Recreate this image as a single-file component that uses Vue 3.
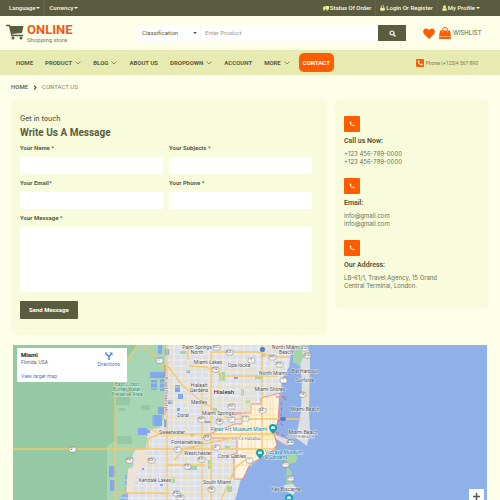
<script setup>
import { ref } from 'vue'

const nav = [
  { text: 'HOME' },
  { text: 'PRODUCT', menu: true },
  { text: 'BLOG', menu: true },
  { text: 'ABOUT US' },
  { text: 'DROPDOWN', menu: true },
  { text: 'ACCOUNT' },
  { text: 'MORE', menu: true },
]

const fields = [
  { id: 'name', label: 'Your Name *', type: 'text' },
  { id: 'subjects', label: 'Your Subjects *', type: 'text' },
  { id: 'email', label: 'Your Email*', type: 'email' },
  { id: 'phone', label: 'Your Phone *', type: 'tel' },
]
const form = ref({ name: '', subjects: '', email: '', phone: '', message: '' })

const contacts = [
  { title: 'Call us Now:', lines: ['+123 456-789-0000', '+123 456-789-0000'] },
  { title: 'Email:', lines: ['info@gmail.com', 'info@gmail.com'] },
  { title: 'Our Address:', lines: ['LB-61/1, Travel Agency, 15 Grand', 'Central Terminal, London.'] },
]

const handset = 'M3 4a2 2 0 0 1 2-2h3l2 6-3 2q2 5 7 7l2-3 6 2v3a2 2 0 0 1-2 2A17 17 0 0 1 3 4z'

// Street grid of the urban area
const minorX = Array.from({ length: 26 }, (_, i) => 132 + i * 7)
const minorY = Array.from({ length: 26 }, (_, i) => 348 + i * 6)

const ponds = [
  [150, 372, 15, 6], [151, 380, 6, 10], [160, 379, 5, 12], [158, 345, 4, 9], [165, 349, 4, 6],
  [152, 415, 10, 11], [158, 407, 6, 7], [164, 419, 3, 8], [138, 428, 9, 7], [109, 466, 7, 11],
  [110, 480, 5, 11], [147, 430, 3, 3], [175, 385, 5, 7], [178, 394, 5, 5], [186, 370, 4, 3],
  [168, 400, 5, 4], [177, 408, 3, 3], [215, 368, 4, 3], [234, 377, 4, 2], [142, 468, 2, 2],
  [160, 484, 3, 2], [205, 421, 5, 2], [190, 434, 4, 2], [175, 448, 3, 2], [248, 359, 4, 2],
]
const parks = [
  [219, 372, 6, 9], [255, 375, 8, 4], [180, 351, 6, 3], [187, 466, 10, 4], [171, 477, 4, 6],
  [208, 460, 4, 9], [246, 400, 4, 3], [241, 389, 3, 7], [227, 486, 5, 6], [261, 353, 4, 4],
  [191, 446, 4, 3], [213, 408, 4, 4], [151, 395, 4, 4], [225, 446, 5, 3], [270, 356, 5, 3],
]

const labels = [
  ['Palm Springs', 197, 349], ['North', 197, 354], ['Miami Lakes', 208, 364], ['Opa-locka', 239, 367],
  ['North Miami', 286, 349], ['Beach', 286, 354], ['North Miami', 273, 375], ['Bal Harbour', 305, 373],
  ['Surfside', 305, 382], ['Hialeah', 199, 387], ['Gardens', 199, 392], ['Miami Shores', 270, 391],
  ['Medley', 199, 404], ['Doral', 183, 417], ['Miami Springs', 218, 415], ['Miami Beach', 305, 411],
  ['Miami Beach', 303, 434], ['Sweetwater', 172, 434], ['Fontainebleau', 187, 444], ['Westchester', 198, 455],
  ['Coral Gables', 232, 458], ['South Miami', 217, 484], ['Key Biscayne', 286, 491], ['Kendale Lakes', 155, 482],
]
const shields = [
  ['27', 159, 360], ['41', 72, 449], ['997', 129, 460], ['826', 151, 460], ['823', 216, 347],
  ['826', 229, 352], ['9', 251, 360], ['909', 272, 357], ['915', 279, 364], ['934', 215, 369],
  ['1', 283, 380], ['953', 231, 406], ['441', 262, 410], ['27', 231, 419], ['948', 219, 421],
  ['969', 201, 419], ['112', 245, 418], ['A1A', 307, 355], ['A1A', 304, 348], ['934', 302, 394],
  ['41', 177, 449], ['41', 216, 447], ['826', 201, 459], ['976', 187, 466], ['1', 249, 460],
  ['874', 176, 493], ['986', 211, 489], ['985', 180, 497], ['836', 207, 437], ['A1A', 290, 442], ['913', 285, 464], ['913', 290, 478],
]
const pins = [[273, 428], [260, 453], [289, 498]]
</script>

<template>
  <div class="page">
    <div class="topbar">
      <div class="group">
        <button type="button">Language<i class="caret"></i></button>
        <button type="button">Currency<i class="caret"></i></button>
      </div>
      <div class="group links">
        <a href="#order">
          <svg width="6" height="5" viewBox="0 0 24 20"><path fill="#f4ef8c" d="M9 0h15v14H9zM0 6l3-4h5v12H0z" /><circle cx="5" cy="16" r="3" fill="#f4ef8c" /><circle cx="18" cy="16" r="3" fill="#f4ef8c" /></svg>
          Status Of Order
        </a>
        <a href="#login">
          <svg width="5" height="6" viewBox="0 0 20 24"><path d="M5 12V7a5 5 0 0 1 10 0v5" fill="none" stroke="#f4ef8c" stroke-width="3" /><rect x="1" y="11" width="18" height="12" rx="2" fill="#f4ef8c" /></svg>
          Login Or Register
        </a>
        <button type="button">
          <svg width="5" height="6" viewBox="0 0 20 24"><circle cx="10" cy="7" r="6" fill="#f4ef8c" /><path d="M1 23v-5q0-5 5-5h8q5 0 5 5v5z" fill="#f4ef8c" /></svg>
          My Profile<i class="caret"></i>
        </button>
      </div>
    </div>

    <header class="header">
      <a class="logo" href="#home">
        <svg width="18" height="16" viewBox="0 0 36 32"><path d="M1 3h6l5 20h21" fill="none" stroke="#5a5c40" stroke-width="3" stroke-linecap="round" /><path d="M8 4h27l-3 14-21 2z" fill="#5a5c40" /><circle cx="14" cy="28" r="3" fill="#5a5c40" /><circle cx="30" cy="28" r="3" fill="#5a5c40" /></svg>
        <span class="brand"><strong>ONLINE</strong><small>Shopping store</small></span>
      </a>
      <form class="search" @submit.prevent>
        <div class="pick">
          <select aria-label="Classification"><option>Classification</option></select>
          <i class="caret"></i>
        </div>
        <input type="search" placeholder="Enter Product" aria-label="Enter Product" />
        <button type="submit" aria-label="Search">
          <svg width="7" height="7" viewBox="0 0 14 14" fill="none" stroke="#fff" stroke-width="2.400"><circle cx="6" cy="6" r="4" /><path d="M9 9l4 4" /></svg>
        </button>
      </form>
      <a class="wishlist" href="#wishlist">
        <svg width="12" height="11" viewBox="0 0 24 22"><path fill="#ff5c00" d="M12 22L2 12C-1 8 0 2 5 1q4-1 7 3 3-4 7-3c5 1 6 7 3 11z" /></svg>
        <svg class="bag" width="12" height="12" viewBox="0 0 24 24"><path fill="#ff5c00" d="M2 7h20l2 12H0zM0 20h24v2q0 2-2 2H2q-2 0-2-2z" /><path d="M7 10V5a5 4 0 0 1 10 0v5" fill="none" stroke="#ff5c00" stroke-width="2" /><path d="M7 8v3M17 8v3" stroke="#fdffe8" stroke-width="1" /></svg>
        <span>WISHLIST</span>
      </a>
    </header>

    <nav class="nav">
      <a v-for="item in nav" :key="item.text" href="#menu">
        {{ item.text }}
        <svg v-if="item.menu" width="6" height="4" viewBox="0 0 12 8"><path d="M1 1l5 5 5-5" fill="none" stroke="#8a8d5c" stroke-width="2" /></svg>
      </a>
      <a class="active" href="#contact">CONTACT</a>
      <a class="phone" href="tel:+1234567890">
        <span class="badge"><svg width="6" height="6" viewBox="0 0 24 24"><path :d="handset" fill="#fff" /></svg></span>
        Phone (+123)4 567 890
      </a>
    </nav>

    <div class="crumbs">
      <a href="#home">HOME</a>
      <svg width="4" height="5" viewBox="0 0 8 10"><path d="M2 1l4 4-4 4" fill="none" stroke="#5a5c40" stroke-width="2.400" /></svg>
      <span>CONTACT US</span>
    </div>

    <main class="columns">
      <form class="card message" @submit.prevent>
        <p class="intro">Get in touch</p>
        <h2>Write Us A Message</h2>
        <div class="fields">
          <div v-for="f in fields" :key="f.id" class="field">
            <label :for="f.id">{{ f.label }}</label>
            <input :id="f.id" v-model="form[f.id]" :type="f.type" />
          </div>
          <div class="field wide">
            <label for="message">Your Message *</label>
            <textarea id="message" v-model="form.message"></textarea>
          </div>
        </div>
        <button class="send" type="submit">Send Message</button>
      </form>

      <aside class="card info">
        <section v-for="c in contacts" :key="c.title">
          <span class="tile"><svg width="6" height="6" viewBox="0 0 24 24"><path :d="handset" fill="#fff" /></svg></span>
          <h3>{{ c.title }}</h3>
          <p v-for="(line, i) in c.lines" :key="i">{{ line }}</p>
        </section>
      </aside>
    </main>

    <div class="map">
      <svg class="canvas" viewBox="13 345 474 155" preserveAspectRatio="xMinYMin slice" role="img" aria-label="Map of Miami">
        <rect x="13" y="345" width="474" height="155" fill="#90b1e8" />
        <path fill="#dce0e6" d="M128 345H292L289 367 282 379 280 398 277 421 273 434 276 445 270 453 260 459 249 466 241 479 235 500H128z" />
        <clipPath id="land"><path d="M133 430L163 420 167 345H290L289 367 282 379 280 398 277 421 273 434 276 445 260 459 249 466 241 479 235 500H118L125 470 133 450z" /></clipPath>
        <g clip-path="url(#land)">
          <path v-for="x in minorX" :key="'x' + x" :d="`M${x} 345V500`" stroke="#f3f4f6" stroke-width="0.700" />
          <path v-for="y in minorY" :key="'y' + y" :d="`M120 ${y}H292`" stroke="#f3f4f6" stroke-width="0.700" />
        </g>

        <path fill="#94c9a3" d="M13 345H138L118 373 116 442 108 448 109 500H13z" />
        <path fill="#a8d6b5" d="M137 345H166L164 418 160 428 148 430 146 450 133 452 133 468 125 474 125 491 119 500H107V446L116 441V372z" />
        <path fill="#94c9a3" d="M116 397h14v8h-14zM117 436h14l2 8h-16zM123 388h9v5h-9zM119 408h6v3h-6zM141 405h9v5h-9z" />
        <path fill="#efe1d3" d="M135 450l12-1v17l-12 8-2 17-7 1 2-23 7-3zM149 430l14-2v8h-13z" />
        <rect v-for="(p, i) in ponds" :key="'w' + i" :x="p[0]" :y="p[1]" :width="p[2]" :height="p[3]" fill="#82a9ec" />
        <rect v-for="(p, i) in parks" :key="'p' + i" :x="p[0]" :y="p[1]" :width="p[2]" :height="p[3]" fill="#a5d5a8" />
        <path stroke="#a8d6b5" stroke-width="1" d="M150 383h15M150 388h15M153 410v17" />

        <path fill="#dce0e6" d="M294 345h14l2 12-1 54 1 20-3 15-11-8 5-27 1-30-2-18-7-7z" />
        <path fill="#a5d5a8" d="M293 349l7-1 4 8-5 10-6-4zM285 457l9-4 4 5-3 5-9 1zM287 466l5 7-1 8 5 7-7 1-3-8z" />
        <path fill="#dce0e6" d="M284 485l9-1 4 5-4 6-9-5z" />
        <path fill="#dce0e6" stroke="#ea8d8d" stroke-width="0.700" d="M274 434l14 5 6 6-7 1-13-8z" />

        <path fill="#fdf5e2" stroke="#ea8585" stroke-width="1" d="M251 404h10v-6l19-5-2 28-4 13 3 11-6 7-10 6-11 6-7 15h-9v-25h3v-16h-34l6-4 16-6 10-4h7v-10h-9v-1h18z" />

        <g fill="none" stroke="#f5dfa0" stroke-width="0.900">
          <path d="M151 460V500M172 345v140M187 352V500M211 352V500M221 345V490M231 400V485M242 345V466M251 362V466M270 345V442M281 350V375" />
          <path d="M168 371h112M170 387h113M167 401h84M165 419h108M165 436h108M150 449h125M148 465h103M130 493h106M235 409h42M238 415h38M238 427h37M243 432h31M243 439h31M243 453h22M168 478h72" />
          <path d="M248 400V464M255 399V458M262 398V455M267 397V452M273 396V445M308 356L305 435" />
        </g>
        <g fill="none" stroke="#f7c767" stroke-width="1.300">
          <path d="M115 381V500M13 449H275M138 345L115 381M142 345Q155 355 167 372M167 345V500M148 449V439L160 434H275M149 429l15 6" />
          <path d="M166 364l17 22 18 15 30 19M188 360V345M211 352h46l18 5h15M211 352V500M202 385V500M262 345V454M118 493h51M167 465h38M231 419h70M241 436l-55 12-12 12M221 500l15-33 12-9M189 366l17 1 17 9h54" />
        </g>
        <path fill="none" stroke="#d95f69" stroke-width="1" stroke-dasharray="3 3" d="M276 397h11l-6 7 1 9-4 9 6 4M276 432l10 5 7 7" />
        <path fill="none" stroke="#b47c76" stroke-width="0.700" d="M165 365v50" />

        <g class="shield">
          <template v-for="(s, i) in shields" :key="'s' + i">
            <rect :x="s[1] - 3" :y="s[2] - 2" width="7" height="5" rx="2" />
            <text :x="s[1]" :y="s[2] + 1">{{ s[0] }}</text>
          </template>
        </g>
        <rect x="260" y="347" width="5" height="5" rx="2" fill="#547dca" />
        <rect x="280" y="417" width="6" height="4" rx="2" fill="#547dca" />

        <g class="place">
          <text v-for="(l, i) in labels" :key="'l' + i" :x="l[1]" :y="l[2]">{{ l[0] }}</text>
          <text class="city" x="224" y="394">Hialeah</text>
          <text class="area" x="246" y="440">LITTLE HAVANA</text>
          <text class="area" x="301" y="438">SOUTH BEACH</text>
          <text class="park" x="127" y="386">East Coast</text>
          <text class="park" x="127" y="391">Buffer Water</text>
          <text class="park" x="127" y="396">Preserve Area</text>
          <text class="sight" x="239" y="431">Pérez Art Museum Miami</text>
          <text class="sight" x="284" y="454">Vizcaya Museum</text>
          <text class="sight" x="276" y="459">&amp; Gardens</text>
          <text class="route" transform="translate(165 395) rotate(90)">Ronald Reagan Tpke</text>
        </g>
        <g v-for="(p, i) in pins" :key="'n' + i">
          <path :d="`M${p[0]} ${p[1] + 6}q-4-4-4-6a4 4 0 0 1 8 0q0 2-4 6z`" fill="#16a5b5" />
          <path :d="`M${p[0] - 2} ${p[1] + 1}v-2l2-1 2 1v2z`" fill="#d9f6f7" />
        </g>
      </svg>

      <div class="place-card">
        <div class="where">
          <strong>Miami</strong>
          <span>Florida, USA</span>
          <a href="#map">View larger map</a>
        </div>
        <a class="directions" href="#directions">
          <svg width="8" height="8" viewBox="0 0 16 16"><path d="M8 16V9L3 4M8 9l5-5" fill="none" stroke="#4a87e8" stroke-width="3" /><path d="M9 1h6v6zM0 1h5L1 6z" fill="#4a87e8" /></svg>
          Directions
        </a>
      </div>
      <button class="zoom" type="button" aria-label="Zoom in">
        <svg width="7" height="7" viewBox="0 0 7 7"><path d="M3 0h1v3h3v1H4v3H3V4H0V3h3z" fill="#555" stroke="#555" stroke-width="0.500" /></svg>
      </button>
    </div>
  </div>
</template>

<style>
body {
  margin: 0;
  background: #fdffe8;
}
</style>

<style scoped>
* {
  box-sizing: border-box;
}
.page {
  font-family: Roboto, "Liberation Sans", sans-serif;
  font-size: 6px;
  line-height: 8px;
  color: #5a5c40;
  background: #fdffe8;
}
a {
  color: inherit;
  text-decoration: none;
}
button,
input,
select,
textarea {
  font: inherit;
  color: inherit;
  border: 0;
  padding: 0;
  margin: 0;
  background: none;
  border-radius: 0;
}
h2,
h3,
p {
  margin: 0;
}
svg {
  flex: none;
}
.caret {
  display: inline-block;
  border: 2px solid transparent;
  border-top-color: currentColor;
  border-bottom: 0;
  vertical-align: middle;
}
.topbar {
  display: flex;
  justify-content: space-between;
  height: 16px;
  padding: 0 20px 0 9px;
  background: #5a5c40;
  color: #fbfbe6;
  font-weight: 500;
}
.group {
  display: flex;
}
.group > * {
  display: flex;
  align-items: center;
  gap: 1px;
}
.group > * + * {
  margin-left: 4px;
  padding-left: 4px;
  border-left: 1px solid #64664b;
}
.group button {
  font-weight: 500;
}
.header {
  display: grid;
  grid-template-columns: 131fr 269fr 94fr;
  align-items: center;
  height: 34px;
  padding-left: 6px;
}
.logo {
  display: flex;
  align-items: flex-start;
  gap: 3px;
}
.brand {
  display: flex;
  flex-direction: column;
}
.brand strong {
  font-size: 13px;
  line-height: 12px;
  color: #f05a1c;
}
.brand small {
  font-size: 6px;
  line-height: 7px;
  color: #777957;
}
.search {
  display: flex;
  height: 16px;
  background: #fff;
}
.pick {
  display: flex;
  align-items: center;
  width: 64px;
  padding: 0 3px 0 5px;
  border-right: 1px solid #f5f5ee;
}
.pick select {
  flex: 1;
  min-width: 0;
  appearance: none;
  outline: 0;
}
.search input {
  flex: 1;
  min-width: 0;
  padding-left: 4px;
}
.search input::placeholder {
  color: #999;
  opacity: 1;
}
.search button {
  display: grid;
  place-items: center;
  width: 28px;
  background: #5a5c40;
}
.wishlist {
  display: flex;
  align-items: center;
  gap: 2px;
  padding-left: 17px;
  font-family: Inter, sans-serif;
}
.bag {
  margin-left: 2px;
}
.nav {
  display: flex;
  align-items: center;
  gap: 12px;
  height: 25px;
  padding: 0 22px 0 16px;
  background: #e7ebb1;
  font-weight: 700;
  white-space: nowrap;
}
.nav a {
  display: flex;
  align-items: center;
  gap: 3px;
}
.nav .active {
  height: 19px;
  margin-left: -3px;
  padding: 0 4px;
  border-radius: 5px;
  background: #ff5c00;
  color: #fff;
}
.nav .phone {
  gap: 2px;
  margin-left: auto;
  font-weight: 400;
  font-size: 5px;
  color: #777957;
}
.badge {
  display: grid;
  place-items: center;
  width: 8px;
  height: 8px;
  border-radius: 1px;
  background: #ff5c00;
}
.crumbs {
  display: flex;
  align-items: center;
  gap: 5px;
  height: 24px;
  padding: 0 11px;
}
.crumbs a {
  font-weight: 500;
}
.crumbs span {
  color: #818368;
}
.columns {
  display: grid;
  grid-template-columns: 316fr 154fr;
  align-items: start;
  gap: 8px;
  padding: 0 11px;
}
.card {
  border-radius: 5px;
  background: #f9fbdd;
}
.message {
  padding: 15px 15px 16px 9px;
}
.intro {
  font-family: Inter, sans-serif;
  font-size: 7px;
  line-height: 10px;
  font-weight: 500;
}
h2 {
  margin: 2px 0 4px;
  font-size: 10px;
  line-height: 14px;
  font-weight: 700;
}
.fields {
  display: grid;
  grid-template-columns: 1fr 1fr;
  gap: 5px 6px;
}
.field {
  display: flex;
  flex-direction: column;
  gap: 5px;
  min-width: 0;
}
.wide {
  grid-column: 1 / -1;
}
.field label {
  font-weight: 700;
}
.field input {
  width: 100%;
  height: 17px;
  padding: 0 4px;
  background: #fff;
}
.field textarea {
  width: 100%;
  height: 65px;
  padding: 4px;
  resize: none;
  background: #fff;
}
.send {
  display: block;
  height: 18px;
  margin-top: 9px;
  padding: 0 9px;
  border-radius: 1px;
  background: #5a5c40;
  color: #fff;
  font-weight: 700;
}
.info {
  display: grid;
  gap: 12px;
  padding: 17px 9px 18px;
}
.tile {
  display: grid;
  place-items: center;
  width: 16px;
  height: 16px;
  border-radius: 1px;
  background: #ff5c00;
}
h3 {
  margin: 4px 0;
  font-size: 7px;
  line-height: 10px;
  font-weight: 700;
}
.info p {
  font-family: Inter, sans-serif;
  color: #6e704f;
}
.map {
  position: relative;
  height: 155px;
  margin: 10px 13px 0;
  overflow: hidden;
}
.canvas {
  display: block;
  width: 100%;
  height: 100%;
}
.place text {
  font-size: 5px;
  text-anchor: middle;
  fill: #4c4f57;
  stroke: #fff;
  stroke-width: 1px;
  stroke-opacity: 0.7;
  paint-order: stroke;
}
.place .city {
  font-size: 6px;
  font-weight: 500;
  fill: #333;
}
.place .area {
  font-size: 4px;
  fill: #777;
}
.place .park {
  fill: #3c8a58;
  stroke-opacity: 0.5;
}
.place .sight {
  font-size: 5px;
  fill: #128796;
}
.place .route {
  font-size: 4px;
  fill: #8b6c5f;
}
.shield rect {
  fill: #fff;
  stroke: #777;
  stroke-width: 0.5px;
}
.shield text {
  font-size: 3px;
  text-anchor: middle;
  fill: #555;
}
.place-card {
  position: absolute;
  top: 3px;
  left: 4px;
  display: flex;
  justify-content: space-between;
  width: 110px;
  height: 34px;
  padding: 4px 7px 3px 4px;
  background: #fff;
  font-size: 5px;
}
.where {
  display: flex;
  flex-direction: column;
}
.where strong {
  font-size: 6px;
  line-height: 6px;
  color: #222;
}
.where span {
  line-height: 9px;
  color: #666;
}
.where a {
  margin-top: auto;
  line-height: 6px;
  color: #3f77df;
}
.directions {
  display: flex;
  flex-direction: column;
  align-items: center;
  color: #3f77df;
}
.zoom {
  position: absolute;
  right: 3px;
  bottom: 0;
  display: grid;
  place-items: center;
  width: 15px;
  height: 11px;
  padding-top: 3px;
  background: #fff;
}
</style>
